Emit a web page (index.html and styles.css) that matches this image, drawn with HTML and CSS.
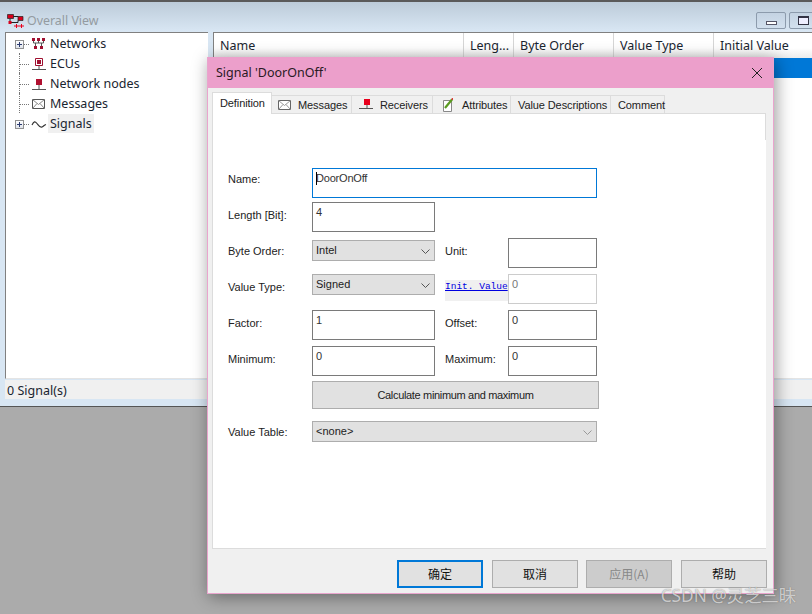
FILE: index.html
```html
<!DOCTYPE html>
<html lang="en">
<head>
<meta charset="utf-8">
<title>Overall View</title>
<link rel="stylesheet" href="styles.css">
</head>
<body>
<div class="desktop">
  <section class="mainwin">
    <header class="titlebar">
      <svg class="appicon" width="17" height="14" viewBox="0 0 17 14"><path d="M6 2.500h5M3 4.500v4M4 8.500h7v-2" stroke="#222" fill="none"/><path d="M.5.500h6v4h-6zM11 2.500h5v4h-5z" fill="#d8001c" stroke="#222" stroke-width=".7"/><path d="M1.500 7h3v3h-3z" fill="#d8001c"/><path d="M7 12h5M9.500 10v4M12 12h5M14.500 10v4" stroke="#e8001c" fill="none"/></svg>
      <span class="wintitle">Overall View</span>
      <span class="spacer"></span>
      <span class="winbtn"><i class="minglyph"></i></span>
      <span class="winbtn winbtn-max"><i class="maxglyph"></i></span>
    </header>
    <div class="panes">
      <nav class="tree">
        <div class="row"><i class="plus"></i><i class="dots"></i>
          <svg class="ico" width="16" height="14" viewBox="0 0 16 14"><path d="M1 1h3v3H1zM6 1h3v3H6zM11 1h3v3h-3zM3 9h3v3H3zM9 9h3v3H9z" fill="#a01030"/><path d="M2.500 4v2h10V4M7.500 4v2M4.500 6v3M10.500 6v3" stroke="#555" fill="none"/></svg>
          <span>Networks</span></div>
        <div class="row"><i class="noplus"></i><i class="dots dots-long"></i>
          <svg class="ico" width="16" height="14" viewBox="0 0 16 14"><path d="M4.500 1.500h7v7h-7z" fill="#fff" stroke="#a01030"/><path d="M6 3h4v4H6z" fill="#a01030"/><path d="M1 12.500h14M8 9v3" stroke="#555" fill="none"/></svg>
          <span>ECUs</span></div>
        <div class="row"><i class="noplus"></i><i class="dots dots-long"></i>
          <svg class="ico" width="16" height="14" viewBox="0 0 16 14"><path d="M5 2h6v6H5z" fill="#b01030"/><path d="M1 12.500h14M8 8v4" stroke="#555" fill="none"/></svg>
          <span>Network nodes</span></div>
        <div class="row"><i class="noplus"></i><i class="dots dots-long"></i>
          <svg class="ico" width="16" height="14" viewBox="0 0 16 14"><path d="M1.500 2.500h12v9h-12z" fill="#fff" stroke="#555"/><path d="M1.500 2.500l6 5 6-5M1.500 11.500l4.500-5M13.500 11.500l-4.500-5" stroke="#888" fill="none"/></svg>
          <span>Messages</span></div>
        <div class="row"><i class="plus"></i><i class="dots"></i>
          <svg class="ico ico-wave" width="16" height="14" viewBox="0 0 16 14"><path d="M1 8c2-4 3-4 5-1.500S9 11 11 10s2-2 4-2.500" stroke="#333" stroke-width="1.200" fill="none"/></svg>
          <span class="sel">Signals</span></div>
      </nav>
      <div class="listpane">
        <div class="listhead">
          <span class="col col-name">Name</span>
          <span class="col col-len">Leng...</span>
          <span class="col col-byte">Byte Order</span>
          <span class="col col-type">Value Type</span>
          <span class="col col-init">Initial Value</span>
        </div>
        <div class="listrow"></div>
      </div>
    </div>
    <div class="status">0 Signal(s)</div>
    <div class="statusedge"></div>
  </section>

  <section class="dialog">
    <header class="dlgtitle">
      <span>Signal 'DoorOnOff'</span>
      <svg width="12" height="12" viewBox="0 0 12 12"><path d="M1 1l10 10M11 1L1 11" stroke="#222" stroke-width="1" fill="none"/></svg>
    </header>
    <div class="tabs">
      <span class="tab tab-on">Definition</span>
      <span class="tab tab-msg"><svg width="13" height="10" viewBox="0 0 13 10"><path d="M.5.500h12v9H.5z" fill="#fff" stroke="#666"/><path d="M.5.500l6 5 6-5M.5 9.500l4.500-5M12.500 9.500l-4.500-5" stroke="#999" fill="none"/></svg>Messages</span>
      <span class="tab tab-rcv"><svg width="14" height="12" viewBox="0 0 14 12"><path d="M5 0h6v6H5z" fill="#e8001c"/><path d="M0 9.500h14M8 6v3" stroke="#555" fill="none"/></svg>Receivers</span>
      <span class="tab tab-att"><svg width="12" height="14" viewBox="0 0 12 14"><path d="M1.500 2.500h8v11h-8z" fill="#fff" stroke="#888"/><path d="M3 10L10 1.500" stroke="#5a9a20" stroke-width="2.200"/><path d="M9 1l2-1 0 2z" fill="#d00"/></svg>Attributes</span>
      <span class="tab tab-vd">Value Descriptions</span>
      <span class="tab tab-com">Comment</span>
    </div>
    <div class="frametop"></div>
    <form class="page">
      <div class="namegrid">
        <label class="lbl lbl-name">Name:</label>
        <div class="field field-focus"><i class="caret"></i>DoorOnOff</div>
        <label class="lbl">Length [Bit]:</label>
        <div class="field field-short">4</div>
      </div>
      <div class="fourgrid">
        <label class="lbl">Byte Order:</label>
        <div class="combo combo-low">Intel<svg class="chev" width="9" height="5" viewBox="0 0 9 5"><path d="M.5.500l4 4 4-4" stroke="#555" fill="none"/></svg></div>
        <label class="lbl lbl2">Unit:</label>
        <div class="field"></div>

        <label class="lbl">Value Type:</label>
        <div class="combo">Signed<svg class="chev" width="9" height="5" viewBox="0 0 9 5"><path d="M.5.500l4 4 4-4" stroke="#555" fill="none"/></svg></div>
        <a class="initlink"><span>Init. Value</span></a>
        <div class="field field-off">0</div>

        <label class="lbl">Factor:</label>
        <div class="field">1</div>
        <label class="lbl lbl2">Offset:</label>
        <div class="field">0</div>

        <label class="lbl">Minimum:</label>
        <div class="field">0</div>
        <label class="lbl lbl2">Maximum:</label>
        <div class="field">0</div>
      </div>
      <div class="calc">Calculate minimum and maximum</div>
      <div class="vtrow">
        <label class="lbl lbl-vt">Value Table:</label>
        <div class="combo">&lt;none&gt;<svg class="chev" width="9" height="5" viewBox="0 0 9 5"><path d="M.5.500l4 4 4-4" stroke="#999" fill="none"/></svg></div>
      </div>
    </form>
    <footer class="buttons">
      <span class="btn btn-def">确定</span>
      <span class="btn">取消</span>
      <span class="btn btn-off">应用(A)</span>
      <span class="btn">帮助</span>
    </footer>
  </section>
  <div class="watermark">CSDN @灵芝三昧</div>
</div>
</body>
</html>
```

FILE: styles.css
```css
* { box-sizing: border-box; }
html, body { margin: 0; padding: 0; }
body { width: 812px; height: 614px; overflow: hidden; background: #ababab; font-family: "Noto Sans", "Noto Sans CJK SC", sans-serif; color: #111; }
i { display: block; }
.desktop { position: relative; width: 812px; height: 614px; overflow: hidden; }

/* background window */
.mainwin { position: absolute; left: 0; top: 0; width: 812px; height: 407px; display: flex; flex-direction: column; border-top: 2px solid #5a5a5a; background: #d8e6f3; border-bottom: 1px solid #555; }
.titlebar { height: 30px; flex: none; display: flex; align-items: center; padding: 7px 0 0 7px; background: linear-gradient(#bccbd9, #d9e7f4); }
.appicon { margin-right: 3px; margin-top: 1px; }
.wintitle { font-size: 12.400px; color: #949ba1; }
.spacer { flex: 1; }
.winbtn { width: 30px; height: 17px; margin-right: 3px; border: 1px solid #8c9bac; border-radius: 2px; background: linear-gradient(#c4d3e2, #d2e0ee); display: flex; align-items: center; justify-content: center; flex: none; }
.winbtn-max { width: 31px; margin-right: -8px; justify-content: flex-start; padding-left: 8px; }
.minglyph { width: 11px; height: 4px; margin-top: 4px; border: 1px solid #556; background: #fff; }
.maxglyph { width: 11px; height: 9px; border: 1px solid #334; border-top-width: 2px; background: #eef; }
.panes { flex: 1; display: flex; padding-left: 5px; gap: 5px; min-height: 0; }
.tree { width: 203px; background: #fff; border-top: 1px solid #808080; border-left: 1px solid #808080; border-bottom: 1px solid #e4e4e4; font-size: 12.500px; color: #1a2530; }
.row { height: 20px; display: flex; align-items: center; }
.plus { position: relative; width: 9px; height: 9px; margin-left: 9px; margin-top: 2px; border: 1px solid #919191; background: linear-gradient(#fff, #dfe3ea); }
.plus::before { content: ""; position: absolute; left: 1px; top: 3px; width: 5px; height: 1px; background: #2a3a70; }
.plus::after { content: ""; position: absolute; left: 3px; top: 1px; width: 1px; height: 5px; background: #2a3a70; }
.noplus { width: 1px; height: 20px; margin-left: 13px; border-left: 1px dotted #777; }
.dots { width: 5px; margin-top: 2px; border-top: 1px dotted #777; margin-right: 2px; }
.dots-long { width: 9px; }
.ico { margin-right: 3px; margin-top: 1px; flex: none; }
.ico-wave { margin-right: 1px; }
.row .sel { background: #f0f0f0; padding: 2px; line-height: 15px; }
.listpane { flex: 1; background: #fff; display: flex; flex-direction: column; border-top: 1px solid #808080; border-left: 1px solid #808080; border-bottom: 1px solid #e4e4e4; }
.listhead { height: 25px; display: flex; font-size: 12.500px; background: linear-gradient(#fff 60%, #ececec); }
.col { display: flex; align-items: center; padding-left: 6px; border-right: 1px solid #d6d6d6; color: #1a2530; }
.col-name { width: 250px; }
.col-len { width: 50px; }
.col-byte { width: 100px; }
.col-type { width: 100px; }
.col-init { width: 98px; border-right: 0; }
.listrow { height: 20px; background: #0078d7; }
.status { height: 19px; flex: none; margin-top: 1px; margin-left: 5px; background: #f0f0f0; font-size: 12.500px; line-height: 21px; padding-left: 2px; color: #1a2530; }
.statusedge { height: 7px; flex: none; }

/* dialog */
.dialog { position: absolute; left: 207px; top: 57px; width: 567px; height: 537px; background: #f0f0f0; border: 1px solid #e9a5cd; border-top: 0; display: flex; flex-direction: column; box-shadow: 2px 3px 16px rgba(0,0,0,.4); }
.dlgtitle { height: 31px; flex: none; background: #ec9fcb; display: flex; align-items: center; justify-content: space-between; padding: 0 10px 0 8px; font-size: 12.500px; color: #2a1a24; }
.tabs { display: flex; height: 21px; flex: none; margin-top: 4px; padding-left: 4px; align-items: flex-end; font-family: "Liberation Sans", sans-serif; font-size: 11px; letter-spacing: -.1px; }
.tab { height: 18px; flex: none; display: flex; align-items: center; padding-left: 7px; border: 1px solid #dcdcdc; border-left: 0; border-bottom: 0; background: #f0f0f0; color: #222; }
.tab-on { width: 60px; height: 22px; padding: 0 0 1px 7px; background: #fff; border-left: 1px solid #dcdcdc; margin-bottom: -1px; position: relative; z-index: 1; }
.tab-msg { width: 80px; gap: 7px; padding-left: 6px; }
.tab-rcv { width: 81px; gap: 7px; }
.tab-att { width: 78px; gap: 8px; padding-left: 9px; }
.tab-vd { width: 100px; }
.tab-com { width: 54px; }
.frametop { height: 27px; flex: none; margin: 0 7px 0 4px; background: #fff; border: 1px solid #dcdcdc; border-bottom: 0; }
.page { flex: 1; margin: 0 7px 0 4px; background: #fff; border-left: 1px solid #dcdcdc; border-bottom: 1px solid #dcdcdc; padding: 28px 0 0 15px; font-family: "Liberation Sans", sans-serif; font-size: 11px; color: #222; }
.namegrid { display: grid; grid-template-columns: 84px 285px; grid-template-rows: 30px 30px; row-gap: 4px; }
.fourgrid { display: grid; grid-template-columns: 84px 123px 73px 89px; grid-template-rows: repeat(4, 30px); row-gap: 6px; margin-top: 6px; }
.lbl { display: flex; align-items: center; padding-bottom: 4px; }
.lbl-name { padding-bottom: 8px; }
.lbl-vt { padding-bottom: 0; }
.lbl2 { padding-left: 10px; }
.field { height: 30px; border: 1px solid #7a7a7a; background: #fff; padding: 2px 3px; line-height: 14px; color: #333; letter-spacing: -.2px; }
.field-short { width: 123px; }
.field-focus { border-color: #0078d7; position: relative; }
.caret { position: absolute; left: 3px; top: 3px; width: 1px; height: 13px; background: #000; }
.field-off { border-color: #cccccc; color: #777; }
.combo { position: relative; height: 21px; align-self: start; border: 1px solid #adadad; background: #e1e1e1; padding-left: 3px; line-height: 19px; }
.combo-low { margin-top: 2px; }
.chev { position: absolute; right: 4px; top: 8px; }
.initlink { align-self: start; display: block; width: 63px; height: 21px; margin: 6px 0 0 10px; background: #f0f0f0; font-family: "Liberation Mono", monospace; font-size: 9.500px; line-height: 13px; color: #0000e0; overflow: hidden; white-space: nowrap; }
.initlink span { text-decoration: underline; }
.calc { margin: 5px 0 0 84px; width: 287px; height: 28px; border: 1px solid #adadad; background: #e1e1e1; text-align: center; line-height: 26px; letter-spacing: -.33px; }
.vtrow { display: grid; grid-template-columns: 84px 285px; margin-top: 12px; height: 21px; }
.buttons { height: 44px; flex: none; display: flex; gap: 9px; justify-content: flex-end; padding: 11px 6px 0 0; font-size: 12px; }
.btn { width: 86px; height: 28px; padding-bottom: 2px; border: 1px solid #adadad; background: #e1e1e1; display: flex; align-items: center; justify-content: center; font-family: "Noto Sans CJK SC", sans-serif; color: #111; }
.btn-def { border: 2px solid #0078d7; }
.btn-off { margin-left: -1px; background: #cccccc; color: #888; }
.watermark { position: absolute; right: 16px; bottom: 9px; font-family: "Noto Sans", "Noto Sans CJK SC", sans-serif; font-size: 17.300px; line-height: 18px; color: rgba(255,255,255,.68); text-shadow: 0 0 1px rgba(50,50,50,.6); white-space: nowrap; }
```
